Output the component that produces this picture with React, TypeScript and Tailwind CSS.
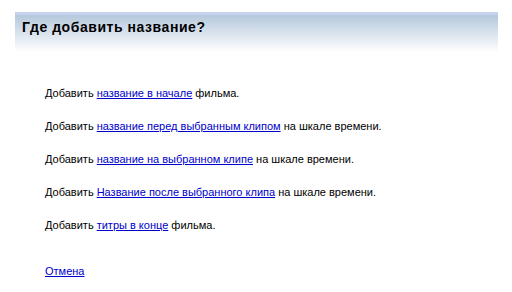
const rows: { pre: string; link: string; post: string }[] = [
  { pre: "Добавить ", link: "название в начале", post: " фильма." },
  { pre: "Добавить ", link: "название перед выбранным клипом", post: " на шкале времени." },
  { pre: "Добавить ", link: "название на выбранном клипе", post: " на шкале времени." },
  { pre: "Добавить ", link: "Название после выбранного клипа", post: " на шкале времени." },
  { pre: "Добавить ", link: "титры в конце", post: " фильма." },
];

const App = () => {
  return (
    <div className="w-[512px] h-[292px] bg-white overflow-hidden font-['Liberation_Sans',Arial,sans-serif] text-black">
      <div className="pt-3 pl-[15px] pr-[14px]">
        <div className="h-10 border-t-[3px] border-[#c5d3ee] bg-gradient-to-b from-[#b5c8dc] to-white pl-[7px] pt-[4px]">
          <h1 className="text-[14px] font-bold leading-[17px] tracking-[0.55px]">Где добавить название?</h1>
        </div>
      </div>
      <div className="pl-[45px] pt-[34px] flex flex-col gap-[18px] text-[11px] leading-[15px]">
        {rows.map((r) => (
          <p key={r.link}>
            {r.pre}
            <a href="#" className="text-[#0000cc] underline">
              {r.link}
            </a>
            {r.post}
          </p>
        ))}
        <p className="mt-[13px]">
          <a href="#" className="text-[#0000cc] underline">
            Отмена
          </a>
        </p>
      </div>
    </div>
  );
};

export default App;
